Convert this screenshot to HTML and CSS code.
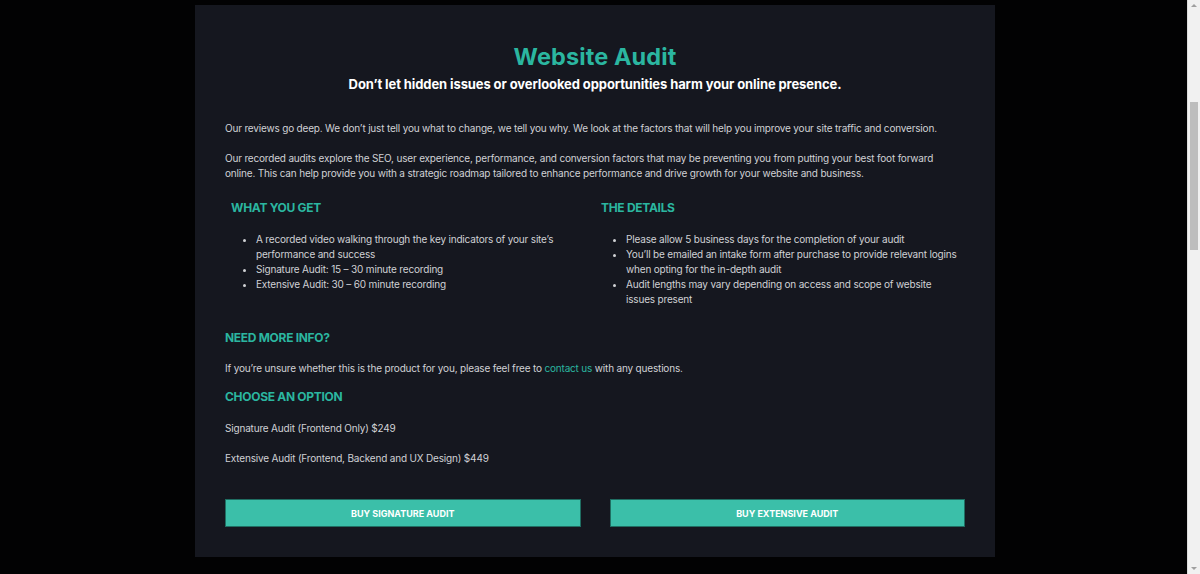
FILE: index.html
```html
<!DOCTYPE html>
<html lang="en">
<head>
<meta charset="utf-8">
<title>Website Audit</title>
<link rel="stylesheet" href="styles.css">
</head>
<body>
<div class="page">
  <main class="card">
    <header class="hero">
      <h1 class="title">Website Audit</h1>
      <p class="subtitle">Don’t let hidden issues or overlooked opportunities harm your online presence.</p>
    </header>
    <section class="intro">
      <p>Our reviews go deep. We don’t just tell you what to change, we tell you why. We look at the factors that will help you improve your site traffic and conversion.</p>
      <p>Our recorded audits explore the SEO, user experience, performance, and conversion factors that may be preventing you from putting your best foot forward online. This can help provide you with a strategic roadmap tailored to enhance performance and drive growth for your website and business.</p>
    </section>
    <section class="columns">
      <div class="col">
        <h2 class="col-title">WHAT YOU GET</h2>
        <ul class="list">
          <li>A recorded video walking through the key indicators of your site’s performance and success</li>
          <li>Signature Audit: 15 – 30 minute recording</li>
          <li>Extensive Audit: 30 – 60 minute recording</li>
        </ul>
      </div>
      <div class="col">
        <h2 class="col-title">THE DETAILS</h2>
        <ul class="list">
          <li>Please allow 5 business days for the completion of your audit</li>
          <li>You’ll be emailed an intake form after purchase to provide relevant logins when opting for the in-depth audit</li>
          <li>Audit lengths may vary depending on access and scope of website issues present</li>
        </ul>
      </div>
    </section>
    <section class="info">
      <h3 class="info-title">NEED MORE INFO?</h3>
      <p>If you’re unsure whether this is the product for you, please feel free to <a class="link" href="#">contact us</a> with any questions.</p>
    </section>
    <section class="options">
      <h3 class="opt-title">CHOOSE AN OPTION</h3>
      <p class="opt">Signature Audit (Frontend Only) $249</p>
      <p class="opt">Extensive Audit (Frontend, Backend and UX Design) $449</p>
    </section>
    <div class="buttons">
      <a class="btn" href="#">BUY SIGNATURE AUDIT</a>
      <a class="btn" href="#">BUY EXTENSIVE AUDIT</a>
    </div>
  </main>
</div>
<div class="scrollbar">
  <div class="sb-arrow sb-up"></div>
  <div class="sb-thumb"></div>
  <div class="sb-arrow sb-down"></div>
</div>
</body>
</html>
```
FILE: styles.css
```css
html, body {
  margin: 0;
  padding: 0;
  background: #020203;
  height: 574px;
  overflow: hidden;
}
body {
  font-family: Inter, "Liberation Sans", sans-serif;
  color: #d0d1d5;
}
.page {
  display: flex;
  padding: 5px 0 0 195px;
}
.card {
  width: 800px;
  box-sizing: border-box;
  background: #15171f;
  padding: 34px 30px 30px;
}
.hero {
  text-align: center;
}
.title {
  margin: 0;
  font-size: 23.5px;
  font-weight: 700;
  color: #2bb6a0;
  line-height: 36px;
  letter-spacing: 0.1px;
}
.subtitle {
  margin: 0;
  font-size: 13px;
  font-weight: 700;
  color: #ffffff;
  line-height: 18px;
  letter-spacing: -0.1px;
}
.intro {
  margin-top: 28px;
}
.intro p {
  margin: 0 0 15px;
  font-size: 10px;
  line-height: 15px;
  letter-spacing: -0.18px;
}
.intro p:last-child {
  margin-bottom: 0;
}
.columns {
  display: grid;
  grid-template-columns: 1fr 1fr;
  margin-top: 17px;
}
.col {
  padding: 0 4px 0 6px;
}
.col-title, .info-title, .opt-title {
  margin: 0;
  font-size: 12px;
  font-weight: 700;
  color: #2bb6a0;
  line-height: 20px;
  letter-spacing: -0.3px;
}
.list {
  margin: 14px 0 0;
  padding: 0 0 0 25px;
  font-size: 10px;
  line-height: 15px;
  letter-spacing: -0.18px;
}
.info {
  margin-top: 21px;
}
.info p {
  margin: 13px 0 0;
  font-size: 10px;
  line-height: 15px;
  letter-spacing: -0.18px;
}
.link {
  color: #2bb6a0;
  text-decoration: none;
}
.options {
  margin-top: 11px;
}
.opt {
  margin: 14px 0 0;
  font-size: 10px;
  line-height: 15px;
  letter-spacing: -0.18px;
}
.opt + .opt {
  margin-top: 15px;
}
.buttons {
  display: grid;
  grid-template-columns: 1fr 1fr;
  gap: 29px;
  margin-top: 33px;
}
.btn {
  display: flex;
  align-items: center;
  justify-content: center;
  height: 28px;
  box-sizing: border-box;
  background: #3bbfa9;
  border: 1px solid #1f6e62;
  color: #ffffff;
  font-size: 9px;
  font-weight: 700;
  letter-spacing: 0;
  text-decoration: none;
}
.scrollbar {
  position: fixed;
  top: 0;
  right: 0;
  width: 13px;
  height: 574px;
  background: #f1f1f1;
  border-left: 1px solid #dcdcdc;
  box-sizing: border-box;
}
.sb-thumb {
  position: absolute;
  left: 2px;
  width: 8px;
  top: 102px;
  height: 148px;
  background: #bdbdbd;
}
.sb-arrow {
  position: absolute;
  left: 3px;
  width: 0;
  height: 0;
  border-left: 3px solid transparent;
  border-right: 3px solid transparent;
}
.sb-up {
  top: 4px;
  border-bottom: 3px solid #a0a0a0;
}
.sb-down {
  bottom: 4px;
  border-top: 3px solid #a0a0a0;
}
```
